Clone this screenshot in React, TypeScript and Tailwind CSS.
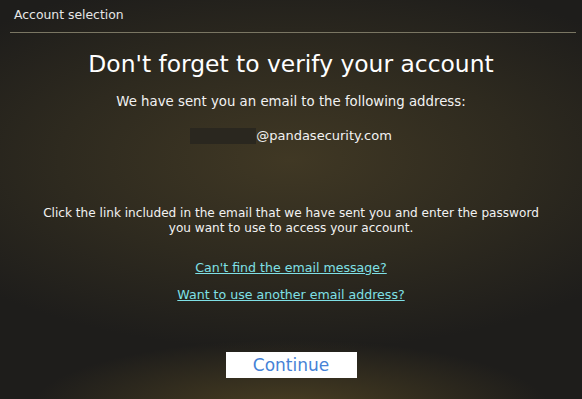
export default function App() {
  return (
    <div className="w-[582px] h-[399px] overflow-hidden bg-[#1e1d1b] bg-[radial-gradient(ellipse_420px_190px_at_290px_160px,#403824_0%,#2e2a1f_55%,rgba(30,29,27,0)_100%),radial-gradient(ellipse_260px_70px_at_290px_410px,#4a3f22_0%,rgba(30,29,27,0)_100%)] font-['DejaVu_Sans',sans-serif] text-[#f2f2f2] flex flex-col">
      {/* header */}
      <div className="h-[32px] pl-[14px] pt-[7px] text-[12.4px] leading-[16px] text-[#e6e6e6]">
        Account selection
      </div>
      <div className="ml-[10px] mr-[6px] h-px bg-[#7a7663]" />

      <div className="flex flex-col items-center text-center">
        <h1 className="mt-[17px] text-[23.4px] leading-[28px] text-white">
          Don't forget to verify your account
        </h1>
        <p className="mt-[16px] text-[13.3px] leading-[16px]">
          We have sent you an email to the following address:
        </p>
        <div className="mt-[18px] flex items-center text-[13px] leading-[16px]">
          <span className="w-[66px] h-[16px] bg-[#2a271f]" />
          <span>@pandasecurity.com</span>
        </div>
        <p className="mt-[62px] text-[12.1px] leading-[15px] w-[520px]">
          Click the link included in the email that we have sent you and enter the password you want to use to access your account.
        </p>
        <a href="#" className="mt-[24px] text-[12.6px] leading-[16px] text-[#7fe0e6] underline">
          Can't find the email message?
        </a>
        <a href="#" className="mt-[11px] text-[12.6px] leading-[16px] text-[#7fe0e6] underline">
          Want to use another email address?
        </a>
        <button className="mt-[49px] w-[131px] h-[26px] bg-white text-[#4682d6] text-[17px] leading-[26px]">
          Continue
        </button>
      </div>
    </div>
  );
}
